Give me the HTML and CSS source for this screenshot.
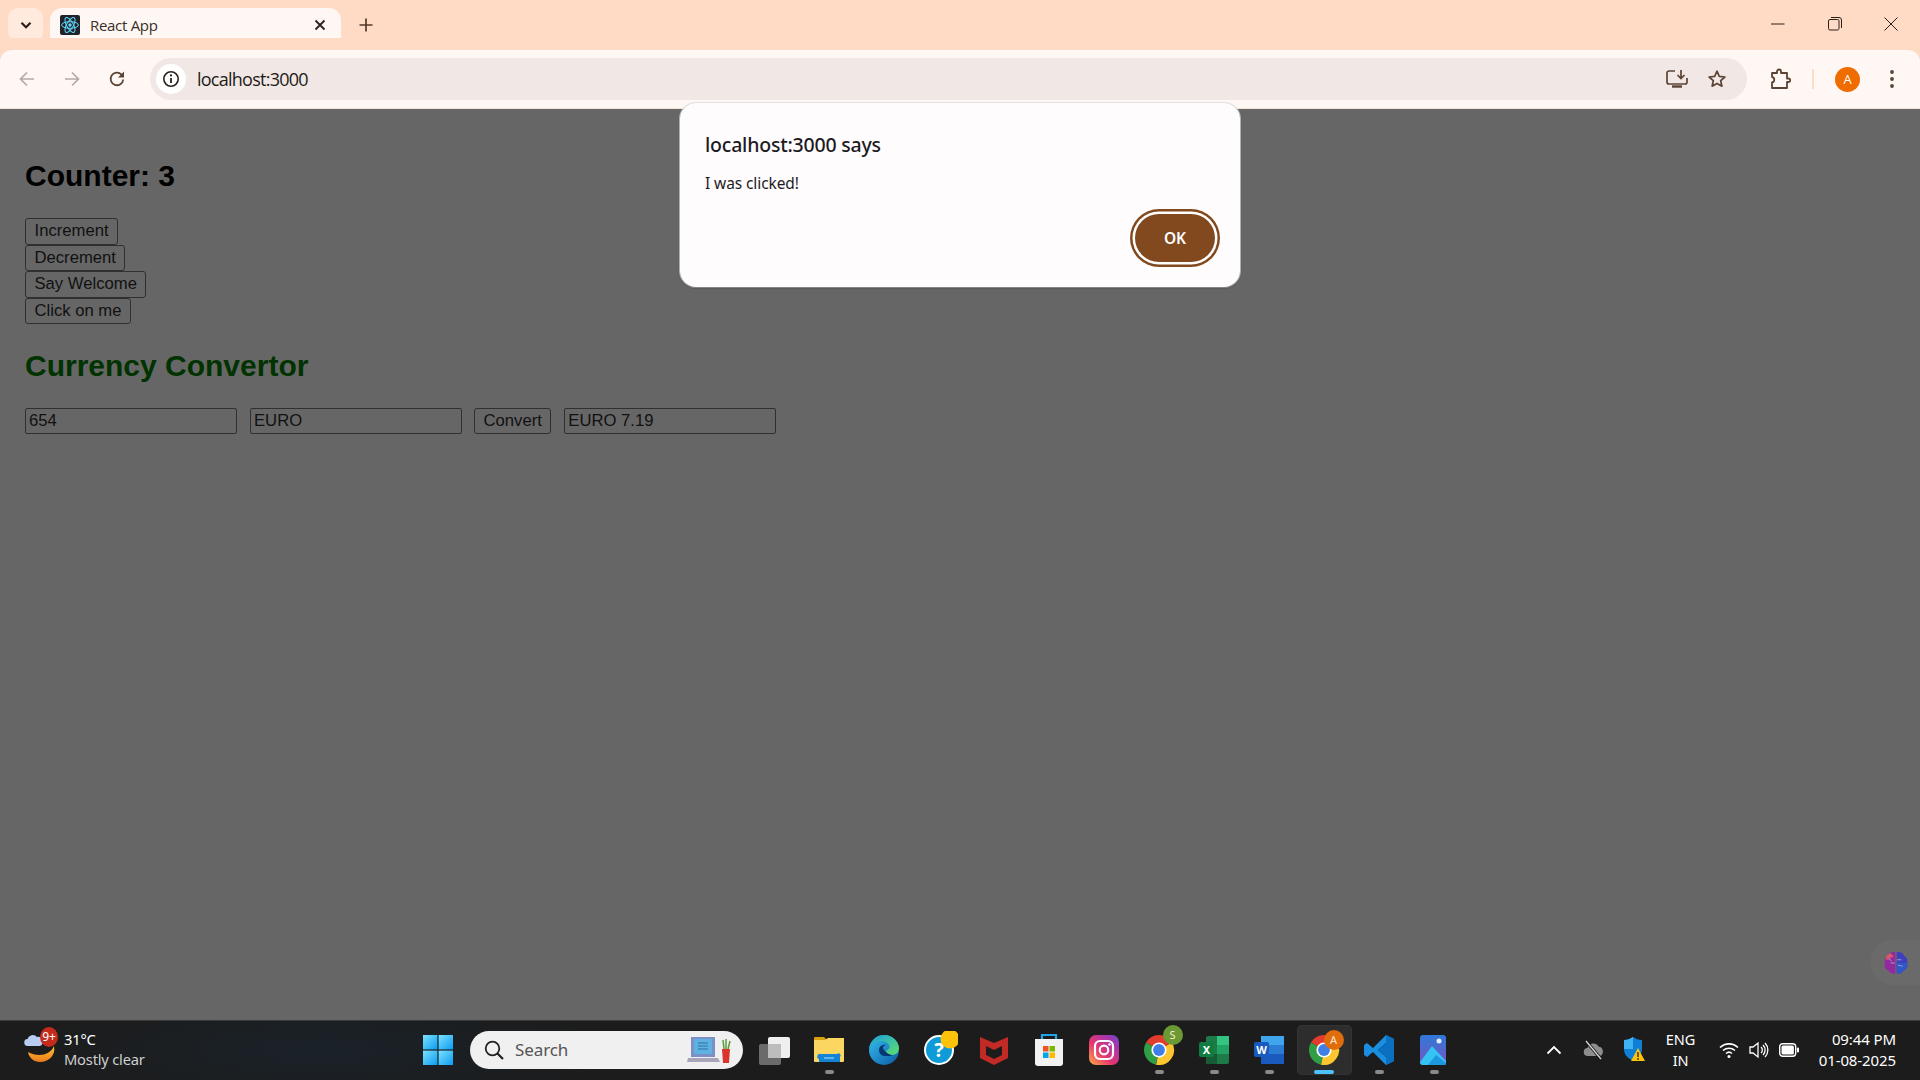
FILE: index.html
```html
<!DOCTYPE html>
<html lang="en">
<head>
<meta charset="utf-8">
<title>React App</title>
<link rel="stylesheet" href="styles.css">
</head>
<body>
<svg class="defs" width="0" height="0">
  <symbol id="chrome" viewBox="0 0 32 32">
    <path d="M16 16L3 8.5A15 15 0 0 1 29 8.5Z" fill="#e33b2e"/>
    <path d="M16 16L29 8.5A15 15 0 0 1 13 30.7Z" fill="#fbc62f"/>
    <path d="M16 16L13 30.7A15 15 0 0 1 3 8.5Z" fill="#2f9e44"/>
    <circle cx="16" cy="16" r="7.6" fill="#fff"/>
    <circle cx="16" cy="16" r="5.9" fill="#3f7fe8"/>
  </symbol>
  <linearGradient id="edgeA" x1="0" y1="0" x2="1" y2="1"><stop offset="0" stop-color="#35c1f1"/><stop offset="1" stop-color="#0c59a4"/></linearGradient>
  <linearGradient id="edgeB" x1="0" y1="0" x2="1" y2="1"><stop offset="0" stop-color="#1b9de2"/><stop offset="1" stop-color="#5de06b"/></linearGradient>
  <linearGradient id="insta" x1="0" y1="1" x2="1" y2="0"><stop offset="0" stop-color="#fdb143"/><stop offset=".4" stop-color="#e8356f"/><stop offset=".8" stop-color="#a435b0"/><stop offset="1" stop-color="#5f55cf"/></linearGradient>
  <linearGradient id="photos" x1="0" y1="0" x2="0" y2="1"><stop offset="0" stop-color="#2f79d8"/><stop offset="1" stop-color="#7a55c0"/></linearGradient>
  <linearGradient id="winl" x1="0" y1="0" x2="1" y2="1"><stop offset="0" stop-color="#7be3ff"/><stop offset="1" stop-color="#0c9bf0"/></linearGradient>
  <linearGradient id="moon" x1="0" y1="0" x2="0" y2="1"><stop offset="0" stop-color="#ffc42e"/><stop offset="1" stop-color="#ec7a1c"/></linearGradient>
</svg>

<header class="tabstrip">
  <button class="tabsearch" aria-label="Search tabs">
    <svg width="16" height="16" viewBox="0 0 16 16"><path d="M3.5 5.8L8 10.2l4.5-4.4" fill="none" stroke="#2b211b" stroke-width="2.2"/></svg>
  </button>
  <div class="tab">
    <span class="favicon">
      <svg width="20" height="20" viewBox="0 0 20 20"><rect width="20" height="20" rx="2" fill="#20232a"/><g fill="none" stroke="#61dafb" stroke-width="1"><ellipse cx="10" cy="10" rx="8.4" ry="3.3"/><ellipse cx="10" cy="10" rx="8.4" ry="3.3" transform="rotate(60 10 10)"/><ellipse cx="10" cy="10" rx="8.4" ry="3.3" transform="rotate(120 10 10)"/></g><circle cx="10" cy="10" r="1.7" fill="#61dafb"/></svg>
    </span>
    <span class="tabtitle">React App</span>
    <svg class="tabclose" width="12" height="12" viewBox="0 0 12 12"><path d="M1.5 1.5l9 9M10.5 1.5l-9 9" stroke="#2b211b" stroke-width="1.8"/></svg>
  </div>
  <svg class="newtab" width="14" height="14" viewBox="0 0 14 14"><path d="M7 .5v13M.5 7h13" stroke="#51392a" stroke-width="1.7"/></svg>
  <div class="wincontrols">
    <svg width="14" height="14" viewBox="0 0 14 14"><path d="M0 7h13.5" stroke="#2b211b" stroke-width="1"/></svg>
    <svg width="14" height="14" viewBox="0 0 14 14"><rect x=".5" y="2.5" width="10.5" height="10.5" rx="1.5" fill="none" stroke="#2b211b"/><path d="M3 .5h8a2.5 2.5 0 0 1 2.5 2.5v8" fill="none" stroke="#2b211b"/></svg>
    <svg width="14" height="14" viewBox="0 0 14 14"><path d="M.5.5l13 13M13.5.5l-13 13" stroke="#2b211b" stroke-width="1"/></svg>
  </div>
</header>

<nav class="toolbar">
  <svg class="navicon" width="18" height="18" viewBox="0 0 18 18"><path d="M16 9H2.5M9 2.5L2.5 9 9 15.5" fill="none" stroke="#b3aaa5" stroke-width="1.7"/></svg>
  <svg class="navicon" width="18" height="18" viewBox="0 0 18 18"><path d="M2 9h13.5M9 2.5L15.5 9 9 15.5" fill="none" stroke="#b3aaa5" stroke-width="1.7"/></svg>
  <svg class="navicon" width="18" height="18" viewBox="0 0 18 18"><path d="M15.2 9.5a6.3 6.3 0 1 1-1.7-4.9L15.6 6.6" fill="none" stroke="#5b4334" stroke-width="1.8"/><path d="M16 1.5V7.5H10Z" fill="#5b4334"/></svg>
  <div class="omnibox">
    <span class="infochip">
      <svg width="18" height="18" viewBox="0 0 18 18"><circle cx="9" cy="9" r="7.2" fill="none" stroke="#2b211b" stroke-width="1.6"/><path d="M9 8v5" stroke="#2b211b" stroke-width="1.8"/><circle cx="9" cy="5.4" r="1.1" fill="#2b211b"/></svg>
    </span>
    <span class="url">localhost:3000</span>
    <svg class="omniicon" width="22" height="20" viewBox="0 0 22 20"><path d="M9 2H3a2 2 0 0 0-2 2v9a2 2 0 0 0 2 2h16a2 2 0 0 0 2-2V9" fill="none" stroke="#5b4334" stroke-width="1.7"/><path d="M6 17.5h10" stroke="#5b4334" stroke-width="2.4"/><path d="M15 1v8M11.5 6l3.5 3.5L18.500 6" fill="none" stroke="#5b4334" stroke-width="1.7"/></svg>
    <svg class="omniicon" width="20" height="20" viewBox="0 0 20 20"><path d="M10 2.200l2.300 5.200 5.600.6-4.200 3.700 1.200 5.500L10 14.400l-4.900 2.800 1.200-5.500L2.100 8l5.600-.6Z" fill="none" stroke="#5b4334" stroke-width="1.7" stroke-linejoin="round"/></svg>
  </div>
  <svg class="puzzle" width="22" height="22" viewBox="0 0 22 22"><path d="M3 5h5V3.500a2 2 0 0 1 4 0V5h6v5.500h1.500a1.700 1.700 0 0 1 0 3.500H18v6H3v-5.500a2.800 2.800 0 0 0 0-5.500Z" fill="none" stroke="#5b4334" stroke-width="1.8" stroke-linejoin="round"/></svg>
  <span class="tooldivider"></span>
  <span class="avatar">A</span>
  <svg class="kebab" width="6" height="20" viewBox="0 0 6 20"><circle cx="3" cy="3" r="1.900" fill="#5b4334"/><circle cx="3" cy="10" r="1.900" fill="#5b4334"/><circle cx="3" cy="17" r="1.900" fill="#5b4334"/></svg>
</nav>

<main class="page">
  <h2 class="heading">Counter: 3</h2>
  <div class="btncol">
    <button class="webbtn">Increment</button>
    <button class="webbtn">Decrement</button>
    <button class="webbtn">Say Welcome</button>
    <button class="webbtn">Click on me</button>
  </div>
  <h2 class="heading green">Currency Convertor</h2>
  <div class="convrow">
    <input class="field" value="654">
    <input class="field" value="EURO">
    <button class="webbtn">Convert</button>
    <input class="field" value="EURO 7.19">
  </div>
  <div class="brainwidget">
    <svg width="26" height="26" viewBox="0 0 24 24"><path d="M11.400 2C8 1.300 5 3 4.500 5.500 1.800 6.500.8 10 1.800 12.500.8 15 2.500 18.500 5 19c1 2.500 4.500 3.500 6.400 2.500Z" fill="#93289f"/><path d="M2.800 9.500A5 5 0 0 1 7 3l3 3Z" fill="#d4566a"/><path d="M12.600 2C16 1.300 19 3 19.500 5.500c2.700 1 3.700 4.500 2.700 7 1 2.500-.7 6-3.200 6.500-1 2.500-4.500 3.500-6.400 2.500Z" fill="#3d3fc0"/><path d="M12.600 12h9.600c1 2.500-.7 6-3.200 6.500-1 2.500-4.500 3.500-6.400 2.500Z" fill="#2f57c8"/><path d="M7 12h4M5 8l3 2M13 9h4M14 14l4 1" stroke="#b3a8d0" stroke-width=".8"/></svg>
  </div>
</main>

<div class="dialog" role="alertdialog">
  <div class="dlgtitle">localhost:3000 says</div>
  <div class="dlgmsg">I was clicked!</div>
  <div class="dlgactions"><button class="okbtn">OK</button></div>
</div>

<footer class="taskbar">
  <div class="weather">
    <span class="wxicon">
      <svg width="34" height="34" viewBox="0 0 34 34"><path d="M31 15C33 24 26 31 17 31 11 31 6 27 5 21 14 26 27 25 31 15Z" fill="url(#moon)"/><path d="M5 15a3.500 3.500 0 0 1-.500-7 5.500 5.500 0 0 1 9.500-2 4.500 4.500 0 0 1 3 9Z" fill="#b9ccf2"/></svg>
      <span class="wxbadge">9+</span>
    </span>
    <span class="wxtext"><span class="wxtemp">31°C</span><span class="wxdesc">Mostly clear</span></span>
  </div>
  <div class="winlogo">
    <svg width="30" height="30" viewBox="0 0 30 30"><rect width="14.400" height="14.400" fill="url(#winl)"/><rect x="15.600" width="14.400" height="14.400" fill="url(#winl)"/><rect y="15.600" width="14.400" height="14.400" fill="url(#winl)"/><rect x="15.600" y="15.600" width="14.400" height="14.400" fill="url(#winl)"/></svg>
  </div>
  <div class="searchpill">
    <svg width="22" height="22" viewBox="0 0 22 22"><circle cx="9.500" cy="9.500" r="6.800" fill="none" stroke="#222" stroke-width="1.800"/><path d="M14.500 14.500l5.500 5.500" stroke="#222" stroke-width="2.200"/></svg>
    <span class="searchtext">Search</span>
    <svg class="searchart" width="44" height="30" viewBox="0 0 44 30"><path d="M4 2h24v20H4Z" fill="#7d8fc4"/><path d="M7 4h18v15H7Z" fill="#5eb2e0"/><path d="M11 8h10M11 11h10M11 14h10" stroke="#2f6ea8"/><path d="M1 23h30l2 4H0Z" fill="#a9a6bb"/><path d="M35 14h8l-1 14h-6Z" fill="#d9342b"/><path d="M37 14l-1-9M39 14l0-10M41 14l2-8" stroke="#5d9a3d" stroke-width="1.500"/></svg>
  </div>
  <div class="apps">
    <span class="app">
      <svg width="32" height="32" viewBox="0 0 32 32"><rect x="10" y="3" width="22" height="21" rx="2" fill="#efefef"/><rect x="1" y="10" width="22" height="21" rx="2" fill="#6b6b6b"/><rect x="10" y="10" width="13" height="14" fill="#bdbdbd"/></svg>
    </span>
    <span class="app running">
      <svg width="32" height="32" viewBox="0 0 32 32"><path d="M1 4a1 1 0 0 1 1-1h9l4 4h-14Z" fill="#d9a20d"/><path d="M1 6h11l3-2h16v23a1 1 0 0 1-1 1H2a1 1 0 0 1-1-1Z" fill="#fbd660"/><path d="M6 25a2 2 0 0 1 2-5h16a2 2 0 0 1 3 3v5H6Z" fill="#1583d6"/><path d="M11 24h10" stroke="#7cc4f2" stroke-width="1.500"/></svg>
    </span>
    <span class="app">
      <svg width="32" height="32" viewBox="0 0 32 32"><circle cx="16" cy="16" r="15" fill="url(#edgeA)"/><path d="M1.500 13C4 4 12 1 16 1c9 0 15 7 15 13 0 5-4 7-7 7-4 0-6-2-6-3 0-3 5-2 3-7-2-4-8-5-12-3-4 2-7 4-8.500 5Z" fill="url(#edgeB)"/><path d="M18 22c-4 0-7-2-7-6 0-3 3-6 7-5-4 1-3 4-2 5 2 3 6 5 9 5-2 1-4 1-7 1Z" fill="#08366e"/></svg>
    </span>
    <span class="app">
      <svg width="38" height="38" viewBox="0 0 38 38"><circle cx="19" cy="19" r="14" fill="#0f9bd7" stroke="#fff" stroke-width="2"/><text x="19" y="26" class="helpq">?</text><circle cx="30" cy="8" r="9.500" fill="#fcc30a"/></svg>
    </span>
    <span class="app">
      <svg width="30" height="32" viewBox="0 0 30 32"><path fill-rule="evenodd" d="M1 3l14 6 14-6v21l-14 7-14-7Zm6 9v9l8 4 8-4v-9l-8 4Z" fill="#c22a26"/></svg>
    </span>
    <span class="app">
      <svg width="32" height="34" viewBox="0 0 32 34"><path d="M9 6V2h14v4" fill="none" stroke="#1fa5e8" stroke-width="2.200"/><path d="M2 6h28v24a3 3 0 0 1-3 3H5a3 3 0 0 1-3-3Z" fill="#f2f2f2"/><rect x="10" y="13" width="5.500" height="5.500" fill="#ef5224"/><rect x="16.500" y="13" width="5.500" height="5.500" fill="#7db700"/><rect x="10" y="19.500" width="5.500" height="5.500" fill="#00a4ef"/><rect x="16.500" y="19.500" width="5.500" height="5.500" fill="#ffb900"/></svg>
    </span>
    <span class="app">
      <svg width="30" height="30" viewBox="0 0 30 30"><rect width="30" height="30" rx="7" fill="url(#insta)"/><rect x="6" y="6" width="18" height="18" rx="5" fill="none" stroke="#fff" stroke-width="2.200"/><circle cx="15" cy="15" r="4.300" fill="none" stroke="#fff" stroke-width="2.200"/><circle cx="20.500" cy="9.500" r="1.300" fill="#fff"/></svg>
    </span>
    <span class="app running">
      <svg width="32" height="32"><use href="#chrome"/></svg>
      <span class="appbadge greenbadge">S</span>
    </span>
    <span class="app running">
      <svg width="30" height="30" viewBox="0 0 30 30"><rect x="7" y="1" width="23" height="28" rx="2" fill="#1e7b47"/><rect x="18" y="1" width="12" height="9" fill="#33c481"/><rect x="18" y="10" width="12" height="9" fill="#21a366"/><rect x="7" y="19" width="11" height="10" fill="#185c37"/><rect y="7" width="15" height="15" rx="2" fill="#107c41"/><text x="7.500" y="19" class="officeL">X</text></svg>
    </span>
    <span class="app running">
      <svg width="30" height="30" viewBox="0 0 30 30"><rect x="7" y="1" width="23" height="28" rx="2" fill="#2b7cd3"/><rect x="7" y="1" width="23" height="9" fill="#41a5ee"/><rect x="7" y="19" width="23" height="10" fill="#185abd"/><rect y="7" width="15" height="15" rx="2" fill="#185abd"/><text x="7.500" y="19" class="officeL">W</text></svg>
    </span>
    <span class="app active">
      <svg width="32" height="32"><use href="#chrome"/></svg>
      <span class="appbadge orangebadge">A</span>
    </span>
    <span class="app running">
      <svg width="32" height="32" viewBox="0 0 32 32"><path d="M23 1l8 4v22l-8 4-13-13-6 5-3-2V11l3-2 6 5Zm0 8l-8 7 8 7Z" fill="#1a8fe0" fill-rule="evenodd"/><path d="M23 1l8 4v22l-8 4Zm0 8l-8 7 8 7Z" fill="#0b70c2" fill-rule="evenodd"/></svg>
    </span>
    <span class="app running">
      <svg width="28" height="32" viewBox="0 0 28 32"><rect y="1" width="26" height="30" rx="3" fill="url(#photos)"/><path d="M0 28L12 12l14 15v2a2 2 0 0 1-2 2H3a3 3 0 0 1-3-3Z" fill="#35c3f3"/><path d="M8 31l8-10 10 8a2 2 0 0 1-2 2Z" fill="#1d97df"/><circle cx="19" cy="7" r="2.500" fill="#e4ecff"/></svg>
    </span>
  </div>
  <div class="tray">
    <svg class="tchev" width="16" height="10" viewBox="0 0 16 10"><path d="M1.500 8.500L8 2l6.500 6.500" fill="none" stroke="#fff" stroke-width="1.800"/></svg>
    <svg class="tcloud" width="22" height="20" viewBox="0 0 22 20"><path d="M5 16a4 4 0 0 1-.500-8 6 6 0 0 1 11-1.500A5 5 0 0 1 17 16Z" fill="#8d8d8d"/><path d="M3 1l15 18" stroke="#1c1c1c" stroke-width="3"/><path d="M3 1l15 18" stroke="#ddd" stroke-width="1.200"/></svg>
    <svg class="tshield" width="22" height="28" viewBox="0 0 22 28"><path d="M10 1c3 2 5 3 9 3v9c0 6-4 9-9 12-5-3-9-6-9-12V4c4 0 6-1 9-3Z" fill="#0f7fd6"/><path d="M10 1c-3 2-5 3-9 3v9h9Z" fill="#3fb4f2"/><path d="M15 12l7 13H8Z" fill="#fcc30a"/><path d="M15 16v5M15 22v2" stroke="#222" stroke-width="1.300"/></svg>
    <span class="tlang"><span>ENG</span><span>IN</span></span>
    <span class="tsys">
      <svg width="20" height="18" viewBox="0 0 20 18"><g fill="none" stroke="#fff" stroke-width="1.600"><path d="M1 6.500a13 13 0 0 1 18 0"/><path d="M4 9.500a9 9 0 0 1 12 0"/><path d="M7 12.500a4.500 4.500 0 0 1 6 0"/></g><circle cx="10" cy="15.500" r="1.500" fill="#fff"/></svg>
      <svg width="20" height="20" viewBox="0 0 20 20"><path d="M1 7v6h3l5 4V3L4 7Z" fill="none" stroke="#fff" stroke-width="1.300"/><path d="M12 7a4 4 0 0 1 0 6M14 5a7 7 0 0 1 0 10M16 3a10 10 0 0 1 0 14" fill="none" stroke="#fff" stroke-width="1.300"/></svg>
      <svg width="20" height="14" viewBox="0 0 20 14"><rect x=".7" y=".7" width="16" height="12.600" rx="3" fill="none" stroke="#fff" stroke-width="1.400"/><rect x="2.500" y="2.500" width="12.400" height="9" rx="1.500" fill="#fff"/><rect x="18" y="4.500" width="2" height="5" rx="1" fill="#fff"/></svg>
    </span>
    <span class="tclock"><span>09:44 PM</span><span>01-08-2025</span></span>
  </div>
</footer>
</body>
</html>
```
FILE: styles.css
```css
* { box-sizing: border-box; }
html, body { margin: 0; height: 100%; }
body {
  width: 1920px;
  height: 1080px;
  overflow: hidden;
  display: flex;
  flex-direction: column;
  position: relative;
  font-family: "Liberation Sans", Arial, sans-serif;
  background: #666;
}
.defs { position: absolute; }

/* tab strip */
.tabstrip {
  height: 50px;
  flex: none;
  background: #ffdbc6;
  display: flex;
  align-items: flex-start;
  padding-left: 8px;
}
.tabsearch {
  width: 35px;
  height: 34px;
  margin-top: 8px;
  border: 0;
  border-radius: 10px;
  background: #ffeadd;
  padding: 0;
  display: flex;
  align-items: center;
  justify-content: center;
}
.tab {
  position: relative;
  width: 291px;
  height: 42px;
  margin: 8px 0 0 7px;
  padding: 0 15px 8px 10px;
  background: #fff7f3;
  border-radius: 12px 12px 0 0;
  display: flex;
  align-items: center;
  gap: 10px;
}
.tab::before, .tab::after {
  content: "";
  position: absolute;
  bottom: 0;
  width: 12px;
  height: 12px;
}
.tab::before { left: -12px; background: radial-gradient(circle at 0 0, #ffdbc6 11.500px, #fff7f3 12px); }
.tab::after { right: -12px; background: radial-gradient(circle at 100% 0, #ffdbc6 11.500px, #fff7f3 12px); }
.favicon { width: 20px; height: 20px; display: flex; }
.tabtitle {
  font: 15px/20px "Open Sans", sans-serif;
  letter-spacing: -.3px;
  color: #3a2e27;
  flex: 1;
}
.newtab { margin: 18px 0 0 18px; }
.wincontrols {
  margin-left: auto;
  display: flex;
  gap: 42.500px;
  padding: 17px 22px 0 0;
}

/* toolbar */
.toolbar {
  height: 59px;
  flex: none;
  background: #fff7f3;
  border-bottom: 1px solid #f6e3d8;
  border-radius: 12px 12px 0 0;
  display: flex;
  align-items: center;
  padding: 0 0 0 18px;
  position: relative;
  box-shadow: 0 -12px 0 #ffdbc6;
}
.navicon { margin-right: 27px; }
.navicon:nth-child(3) { margin-right: 24px; }
.omnibox {
  width: 1597px;
  height: 42px;
  border-radius: 21px;
  background: #f1e8e5;
  display: flex;
  align-items: center;
  padding: 0 20px 0 6px;
}
.infochip {
  width: 30px;
  height: 30px;
  border-radius: 50%;
  background: #fff;
  display: flex;
  align-items: center;
  justify-content: center;
}
.url {
  margin-left: 11px;
  font: 18px/24px "Open Sans", sans-serif;
  letter-spacing: -.75px;
  color: #1f1a17;
  flex: 1;
}
.omniicon { margin-left: 19px; }
.puzzle { margin-left: 22px; }
.tooldivider { width: 2px; height: 20px; background: #ffdbc6; margin-left: 21px; }
.avatar {
  width: 25px;
  height: 25px;
  margin-left: 21px;
  border-radius: 50%;
  background: #ef6c00;
  color: #fff;
  font: 13px/25px "Open Sans", sans-serif;
  text-align: center;
}
.kebab { margin-left: 29px; }

/* page */
.page {
  flex: 1;
  min-height: 0;
  padding: 25px;
  background: #666;
  position: relative;
}
.heading {
  margin: 25px 0 24.500px;
  font-size: 30px;
  line-height: 34.500px;
  font-weight: 700;
  color: #000;
}
.heading.green { margin: 24.500px 0 25px; color: #003300; }
.btncol {
  display: flex;
  flex-direction: column;
  align-items: flex-start;
}
.webbtn {
  height: 26.500px;
  padding: 0 8.500px;
  margin: 0;
  background: #666;
  border: 1.250px solid #303030;
  border-radius: 3px;
  color: #111;
  font: 16.670px "Liberation Sans", Arial, sans-serif;
}
.convrow {
  display: flex;
  align-items: stretch;
  gap: 13px;
  height: 25.500px;
}
.convrow .webbtn { height: 25.500px; margin-left: -1px; }
.field {
  width: 212px;
  padding: 0 3px;
  background: #666;
  border: 1.250px solid #303030;
  border-radius: 2px;
  color: #111;
  font: 16.670px "Liberation Sans", Arial, sans-serif;
}
.brainwidget {
  position: absolute;
  right: 0;
  top: 831px;
  width: 50px;
  height: 45px;
  background: #6a6a6a;
  border-radius: 23px 0 0 23px;
  display: flex;
  align-items: center;
  padding-left: 13px;
}

/* dialog */
.dialog {
  position: absolute;
  left: 680px;
  top: 103px;
  width: 560px;
  height: 184px;
  background: #fffcfe;
  border-radius: 16px;
  box-shadow: 0 1px 2px rgba(0,0,0,.45), 0 0 0 1px rgba(225,225,225,.8);
  padding: 28px 20px 0 25px;
  font-family: "Noto Sans", sans-serif;
  color: #1c1b1f;
}
.dlgtitle {
  font-size: 19.500px;
  line-height: 28px;
  font-weight: 500;
  letter-spacing: -.2px;
}
.dlgmsg {
  margin-top: 14px;
  font-size: 15.500px;
  line-height: 20px;
  letter-spacing: -.1px;
}
.dlgactions {
  display: flex;
  justify-content: flex-end;
  margin-top: 16px;
}
.okbtn {
  width: 80px;
  height: 48px;
  margin: 5px;
  border: 0;
  border-radius: 24px;
  background: #82491e;
  box-shadow: 0 0 0 2.500px #fff, 0 0 0 5px #82491e;
  color: #fff;
  font: 600 15.500px "Noto Sans", sans-serif;
}

/* taskbar */
.taskbar {
  height: 60px;
  flex: none;
  background: radial-gradient(ellipse 300px 60px at 320px 50%, #1a2229, #1c1c1c) #1c1c1c;
  border-top: 1px solid #3a3a3a;
  display: flex;
  align-items: center;
  padding-bottom: 2px;
  font-family: "Noto Sans", sans-serif;
  color: #fff;
}
.weather {
  width: 423px;
  flex: none;
  display: flex;
  align-items: center;
  padding-left: 23px;
}
.wxicon { position: relative; width: 41px; height: 34px; display: block; margin-top: -4px; }
.wxbadge {
  position: absolute;
  left: 17px;
  top: -4px;
  width: 18px;
  height: 20px;
  border-radius: 50%;
  background: #c42b1c;
  font-size: 12px;
  line-height: 20px;
  text-align: center;
}
.wxtext { display: flex; flex-direction: column; font-size: 14.700px; line-height: 20px; letter-spacing: -.2px; margin-top: -2px; }
.wxdesc { color: #cfcfcf; }
.winlogo { display: flex; width: 47px; flex: none; }
.searchpill {
  width: 273px;
  height: 38px;
  flex: none;
  border-radius: 19px;
  background: #f0f0f0;
  display: flex;
  align-items: center;
  padding: 0 12px 0 13px;
}
.searchtext { margin-left: 10px; font-size: 17px; color: #555; flex: 1; letter-spacing: -.1px; }
.apps { display: flex; margin-left: 3.500px; }
.app {
  position: relative;
  width: 55px;
  height: 50px;
  display: flex;
  align-items: center;
  justify-content: center;
}
.running::after, .active::after {
  content: "";
  position: absolute;
  left: 50%;
  bottom: 1px;
  width: 9px;
  height: 4px;
  margin-left: -4.500px;
  border-radius: 2px;
  background: #8a8a8a;
}
.active {
  background: #2d2d2d;
  border-radius: 5px;
  box-shadow: inset 0 0 0 1px #333;
}
.active::after { width: 20px; margin-left: -10px; background: #4cc2ff; }
.appbadge {
  position: absolute;
  width: 20px;
  height: 20px;
  border-radius: 50%;
  color: #ffe9c9;
  font-size: 11px;
  line-height: 20px;
  text-align: center;
}
.greenbadge { left: 31px; top: 0; background: #6b9a35; }
.orangebadge { left: 27px; top: 5px; background: #e06c0c; }
.helpq { font: 700 20px "Noto Sans", sans-serif; fill: #fff; text-anchor: middle; }
.officeL { font: 700 11px "Noto Sans", sans-serif; fill: #fff; text-anchor: middle; }
.tray {
  margin-left: auto;
  display: flex;
  align-items: center;
  padding-right: 24px;
  font-size: 15px;
  line-height: 21px;
}
.tchev { margin-right: 21.500px; }
.tcloud { margin-right: 17.500px; }
.tshield { margin-right: 21px; }
.tlang { display: flex; flex-direction: column; align-items: center; margin-right: 23.500px; letter-spacing: -.1px; font-size: 14.500px; }
.tsys { display: flex; align-items: center; gap: 10px; margin-right: 20px; }
.tclock { display: flex; flex-direction: column; align-items: flex-end; letter-spacing: -.1px; }
```
